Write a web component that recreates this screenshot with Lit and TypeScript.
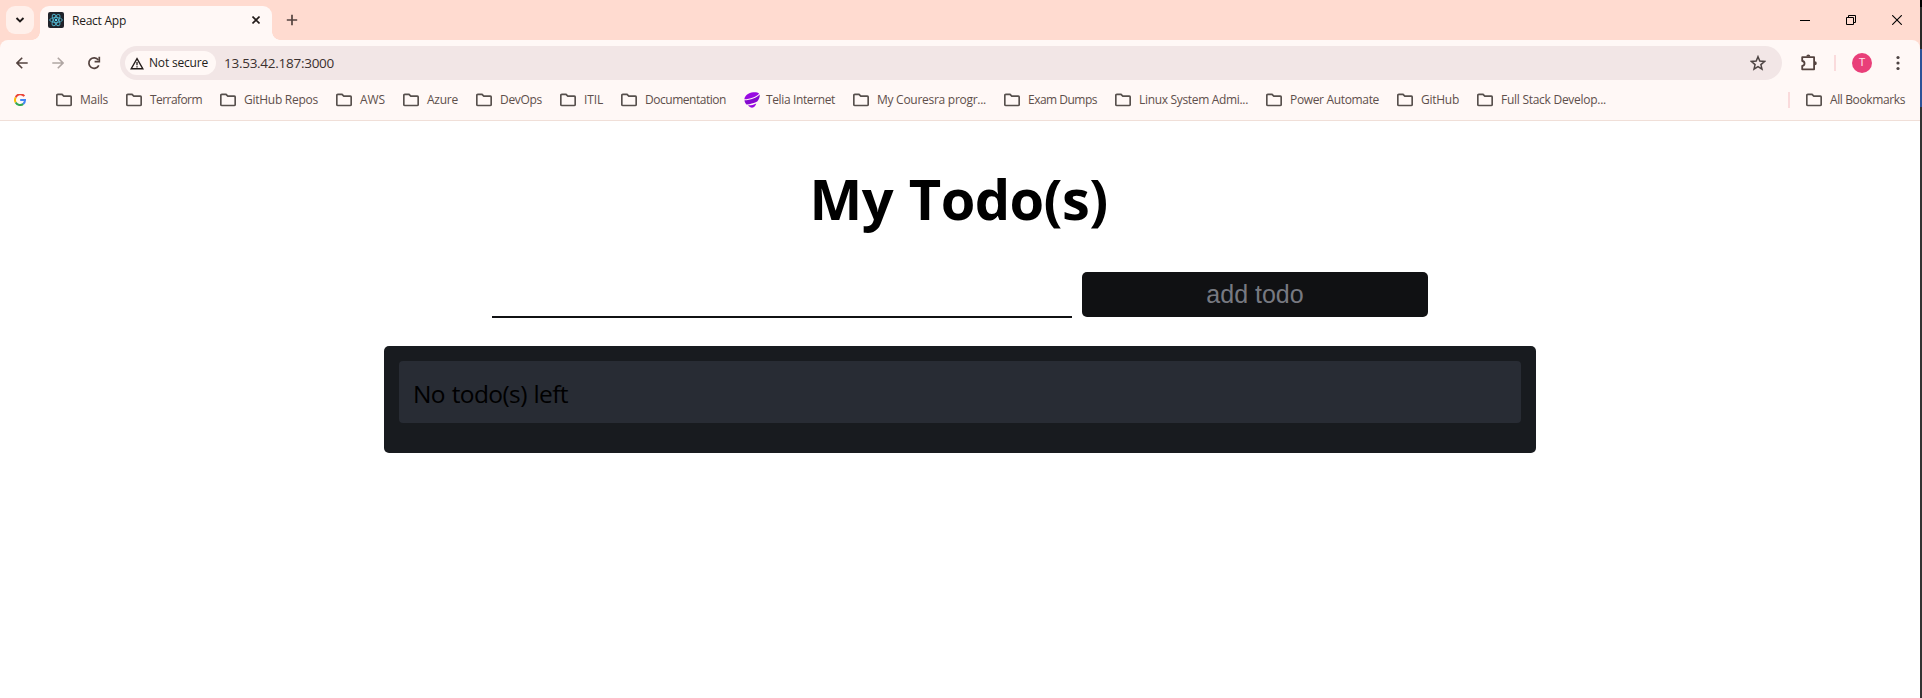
import { LitElement, html, css, svg } from "lit";
import { customElement, property } from "lit/decorators.js";

/** A single line of text whose tracking is adjusted to occupy a given width. */
@customElement("fit-text")
class FitText extends LitElement {
  @property() text = "";
  @property({ type: Number }) width = 0;

  static styles = css`
    :host { display: block; white-space: pre; flex: none; }
    .run { display: inline-block; }
  `;

  firstUpdated() {
    const run = this.renderRoot.querySelector(".run") as HTMLElement;
    const natural = run.getBoundingClientRect().width;
    this.style.width = `${this.width}px`;
    run.style.letterSpacing = `${(this.width - natural) / this.text.length}px`;
  }

  render() {
    return html`<span class="run">${this.text}</span>`;
  }
}

interface Bookmark {
  label: string;
  width: number;
  icon?: "telia";
}

const BOOKMARKS: Bookmark[] = [
  { label: "Mails", width: 28 },
  { label: "Terraform", width: 52 },
  { label: "GitHub Repos", width: 74 },
  { label: "AWS", width: 25 },
  { label: "Azure", width: 31 },
  { label: "DevOps", width: 42 },
  { label: "ITIL", width: 19 },
  { label: "Documentation", width: 81 },
  { label: "Telia Internet", width: 69, icon: "telia" },
  { label: "My Couresra progr...", width: 109 },
  { label: "Exam Dumps", width: 69 },
  { label: "Linux System Admi...", width: 109 },
  { label: "Power Automate", width: 89 },
  { label: "GitHub", width: 38 },
  { label: "Full Stack Develop...", width: 105 },
];

const icon = (w: number, h: number, body: unknown) =>
  html`<svg class="icon" width=${w} height=${h} viewBox="0 0 ${w} ${h}" fill="none">${body}</svg>`;

const folder = icon(16, 14, svg`<path d="M.8 11.4V2.500Q.8 1.300 1.900 1.300H6L7.800 3.200H14Q15.200 3.200 15.200 4.300V11.400Q15.200 12.500 14.100 12.500H1.900Q.8 12.500.8 11.400Z" stroke="#57504d" stroke-width="1.7"/>`);

const telia = icon(16, 16, svg`
  <path d="M.3 7.3C.7 3.5 4.5.6 9.2.2c2.6-.2 4.8.2 5.9 1.2C12.8 4.500 6 7 .3 7.300Z" fill="#990ae3"/>
  <path d="M.5 8.200C6.500 8.200 13 5.600 15.500 2.400c.8 2.300-.6 5.400-2.300 7.200C9.500 11.600 5.300 12.500 2.500 12.400 1.300 11.300.6 9.900.5 8.200Z" fill="#8509d0"/>
  <path d="M4 13.200c2.900.1 5.600-.4 8.300-1.800-.7 2-2 3.600-3.300 4.200-1.700.6-3.700-.8-5-2.400Z" fill="#990ae3"/>`);

const google = icon(12, 12, svg`
  <path d="M10.300 2.200A5 5 0 0 0 1.700 3.500" stroke="#ea4335" stroke-width="2"/>
  <path d="M1.700 3.500a5 5 0 0 0 0 5" stroke="#fbbc04" stroke-width="2"/>
  <path d="M1.700 8.500a5 5 0 0 0 7.500 1.400" stroke="#34a853" stroke-width="2"/>
  <path d="M9.200 9.900A5 5 0 0 0 11 6H6.200" stroke="#4285f4" stroke-width="2"/>`);

const reactLogo = icon(16, 16, svg`
  <rect width="16" height="16" rx="2" fill="#20232a"/>
  <g stroke="#4fb3cc" stroke-width=".9">
    <ellipse cx="8" cy="8" rx="6.300" ry="2.500"/>
    <ellipse cx="8" cy="8" rx="6.300" ry="2.500" transform="rotate(60 8 8)"/>
    <ellipse cx="8" cy="8" rx="6.300" ry="2.500" transform="rotate(120 8 8)"/>
  </g>
  <circle cx="8" cy="8" r="1.200" fill="#61dafb"/>`);

const chevron = icon(10, 8, svg`<path d="M1.500 2 5 5.500 8.500 2" stroke="#1f1a19" stroke-width="1.900"/>`);
const closeTab = icon(8, 8, svg`<path d="M.5.5 7.500 7.500M7.500.5.5 7.500" stroke="#231c1a" stroke-width="1.600"/>`);
const plus = icon(12, 12, svg`<path d="M6 .8V11.200M.8 6H11.200" stroke="#54433f" stroke-width="1.700"/>`);
const minimize = icon(10, 10, svg`<path d="M0 5.500H10" stroke="#000"/>`);
const restore = icon(10, 10, svg`<path d="M.5 2.500H7.500V9.500H.5ZM2.500 2.500V.5H9.500V7.500H7.500" stroke="#000"/>`);
const closeWin = icon(10, 10, svg`<path d="M.2.2 9.800 9.800M9.800.2.2 9.800" stroke="#000" stroke-width="1.100"/>`);
const back = icon(12, 12, svg`<path d="M11.700 6H1.200M6.200.8 1 6l5.200 5.200" stroke="#54433f" stroke-width="1.600"/>`);
const forward = icon(12, 12, svg`<path d="M.3 6H10.800M5.800.8 11 6l-5.200 5.200" stroke="#b0a6a3" stroke-width="1.600"/>`);
const reload = icon(14, 14, svg`
  <path d="M11.800 9.300A5.200 5.200 0 1 1 11.300 4" stroke="#54433f" stroke-width="1.700"/>
  <path d="M12.300.8V5.600H7.600" stroke="#54433f" stroke-width="1.700"/>`);
const warning = icon(14, 13, svg`
  <path d="M7 1.600 12.800 11.700H1.200Z" stroke="#231c1a" stroke-width="1.400"/>
  <path d="M7 5V8.300M7 9.200V10.500" stroke="#231c1a" stroke-width="1.300"/>`);
const star = icon(16, 16, svg`<path d="M8 1.700 9.800 6.100 14.500 6.500 10.900 9.600 12 14.200 8 11.700 4 14.200 5.100 9.600 1.500 6.500 6.200 6.100Z" stroke="#4d4443" stroke-width="1.500"/>`);
const puzzle = icon(18, 18, svg`
  <path d="M2.200 3.200H14.100V15.300H2.200V11.900C5.300 11.500 5.300 7.400 2.200 7Z" stroke="#54433f" stroke-width="1.800" stroke-linejoin="round"/>
  <path d="M6.300 2.600A2 2 0 0 1 10.300 2.600ZM14.800 7.200A2 2 0 0 1 14.800 11.200Z" fill="#54433f"/>`);
const dots = icon(4, 16, svg`<g fill="#4d4443"><circle cx="2" cy="2.500" r="1.600"/><circle cx="2" cy="8" r="1.600"/><circle cx="2" cy="13.500" r="1.600"/></g>`);

@customElement("browser-chrome")
class BrowserChrome extends LitElement {
  static styles = css`
    :host { display: block; background: #ffdbd0; color: #5e4f4b; font: 12px/16px "Open Sans", "Noto Sans", sans-serif; }
    .icon { display: block; flex: none; }
    .tabs { height: 40px; display: flex; box-sizing: border-box; padding: 6px 18px 0 6px; }
    .search { width: 28px; height: 28px; border-radius: 9px; background: #fff0eb; display: grid; place-items: center; }
    .flare { width: 8px; align-self: flex-end; height: 8px; }
    .left { margin-left: -2px; background: radial-gradient(circle at 0 0, transparent 7.500px, #fff8f6 8px); }
    .right { background: radial-gradient(circle at 100% 0, transparent 7.500px, #fff8f6 8px); }
    .tab { width: 232px; height: 34px; box-sizing: border-box; background: #fff8f6; border-radius: 9px 9px 0 0; display: flex; align-items: center; padding: 0 12px 6px 8px; color: #231c1a; }
    .title { margin-left: 8px; padding-top: 1px; flex: 1; }
    .new { margin: 8px 0 0 6px; }
    .window { margin: 9px 0 0 auto; display: flex; gap: 36px; }
    .panel { box-sizing: border-box; background: #fff8f6; border-radius: 8px 8px 0 0; height: 81px; border-bottom: 1px solid #f0dfd8; }
    .bar { height: 46px; box-sizing: border-box; padding: 6px 20px 6px 16px; display: flex; align-items: center; }
    .fwd { margin-left: 24px; }
    .rel { margin-left: 23px; }
    .omni { margin-left: 19px; flex: 1; height: 34px; border-radius: 17px; background: #f2e6e6; display: flex; align-items: center; padding: 0 16px 0 5px; }
    .site { height: 24px; width: 91px; box-sizing: border-box; border-radius: 12px; background: #fff8f6; display: flex; align-items: center; gap: 5px; padding-left: 5px; color: #231c1a; font-weight: 500; }
    .url { margin-left: 8px; font-size: 13.500px; color: #3b302e; flex: 1; }
    .ext { margin-left: 18px; }
    .rule { width: 2px; height: 16px; background: #fadbdc; }
    .r1 { margin: 0 16px 0 16px; }
    .avatar { width: 20px; height: 20px; border-radius: 50%; background: #e93f79; color: #ffe3ec; display: grid; place-items: center; font: 11px/20px Roboto, sans-serif; }
    .more { margin-left: 24px; }
    .marks { height: 28px; display: flex; align-items: center; padding: 0 15px 0 14px; }
    .mark { display: flex; align-items: center; gap: 8px; margin-right: 18px; }
    .telia { gap: 6px; }
    .g { margin-right: 30px; }
    .all { margin-left: auto; display: flex; align-items: center; gap: 8px; }
    .all .rule { margin-right: 8px; }
  `;

  render() {
    return html`
      <div class="tabs">
        <div class="search">${chevron}</div>
        <div class="flare left"></div>
        <div class="tab">
          ${reactLogo}<div class="title"><fit-text text="React App" width="54"></fit-text></div>${closeTab}
        </div>
        <div class="flare right"></div>
        <div class="new">${plus}</div>
        <div class="window">${minimize}${restore}${closeWin}</div>
      </div>
      <div class="panel">
        <div class="bar">
          ${back}<div class="fwd">${forward}</div><div class="rel">${reload}</div>
          <div class="omni">
            <div class="site">${warning}<fit-text text="Not secure" width="59"></fit-text></div>
            <div class="url"><fit-text text="13.53.42.187:3000" width="110"></fit-text></div>
            ${star}
          </div>
          <div class="ext">${puzzle}</div>
          <div class="rule r1"></div>
          <div class="avatar">T</div>
          <div class="more">${dots}</div>
        </div>
        <div class="marks">
          <div class="g">${google}</div>
          ${BOOKMARKS.map((b) => html`
            <div class="mark ${b.icon ?? ""}">
              ${b.icon ? telia : folder}<fit-text .text=${b.label} .width=${b.width}></fit-text>
            </div>`)}
          <div class="all">
            <div class="rule"></div>${folder}<fit-text text="All Bookmarks" width="75"></fit-text>
          </div>
        </div>
      </div>`;
  }
}

@customElement("todo-page")
class TodoPage extends LitElement {
  static styles = css`
    :host { display: flex; flex-direction: column; align-items: center; font-family: "Open Sans", "Noto Sans", sans-serif; color: #000; }
    h1 { margin: 39px 0 0; padding-right: 3px; font-size: 56px; line-height: 76px; font-weight: 700; word-spacing: 2px; }
    .form { margin-top: 36px; display: flex; align-items: flex-start; gap: 10px; }
    input { width: 580px; height: 46px; box-sizing: border-box; border: 0; border-bottom: 2px solid #101113; background: none; padding: 0; outline: 0; }
    button { width: 346px; height: 45px; border: 0; border-radius: 5px; background: #101113; color: #777981; font: 25px/28px "Liberation Sans", Arial, sans-serif; padding: 0 0 2px; }
    .list { width: 1152px; height: 107px; margin-top: 28px; box-sizing: border-box; padding: 15px; border-radius: 5px; background: #181b1f; }
    .item { height: 62px; border-radius: 4px; background: #282c34; box-sizing: border-box; padding: 16px 0 0 14px; font-size: 24.500px; line-height: 33px; word-spacing: 1px; }
  `;

  render() {
    return html`
      <h1><fit-text text="My Todo(s)" width="298"></fit-text></h1>
      <div class="form">
        <input type="text" aria-label="todo" />
        <button>add todo</button>
      </div>
      <div class="list">
        <div class="item"><fit-text text="No todo(s) left" width="155"></fit-text></div>
      </div>`;
  }
}

@customElement("app-root")
class AppRoot extends LitElement {
  static styles = css`
    :host { display: flex; height: 698px; overflow: hidden; background: #fff; }
    .window { width: 1920px; flex: none; }
    .edge { width: 2px; background: linear-gradient(#000 7px, #292929 7px 49px, #2d5297 49px 107px, #333 107px); }
  `;

  render() {
    return html`
      <div class="window">
        <browser-chrome></browser-chrome>
        <todo-page></todo-page>
      </div>
      <div class="edge"></div>`;
  }
}
